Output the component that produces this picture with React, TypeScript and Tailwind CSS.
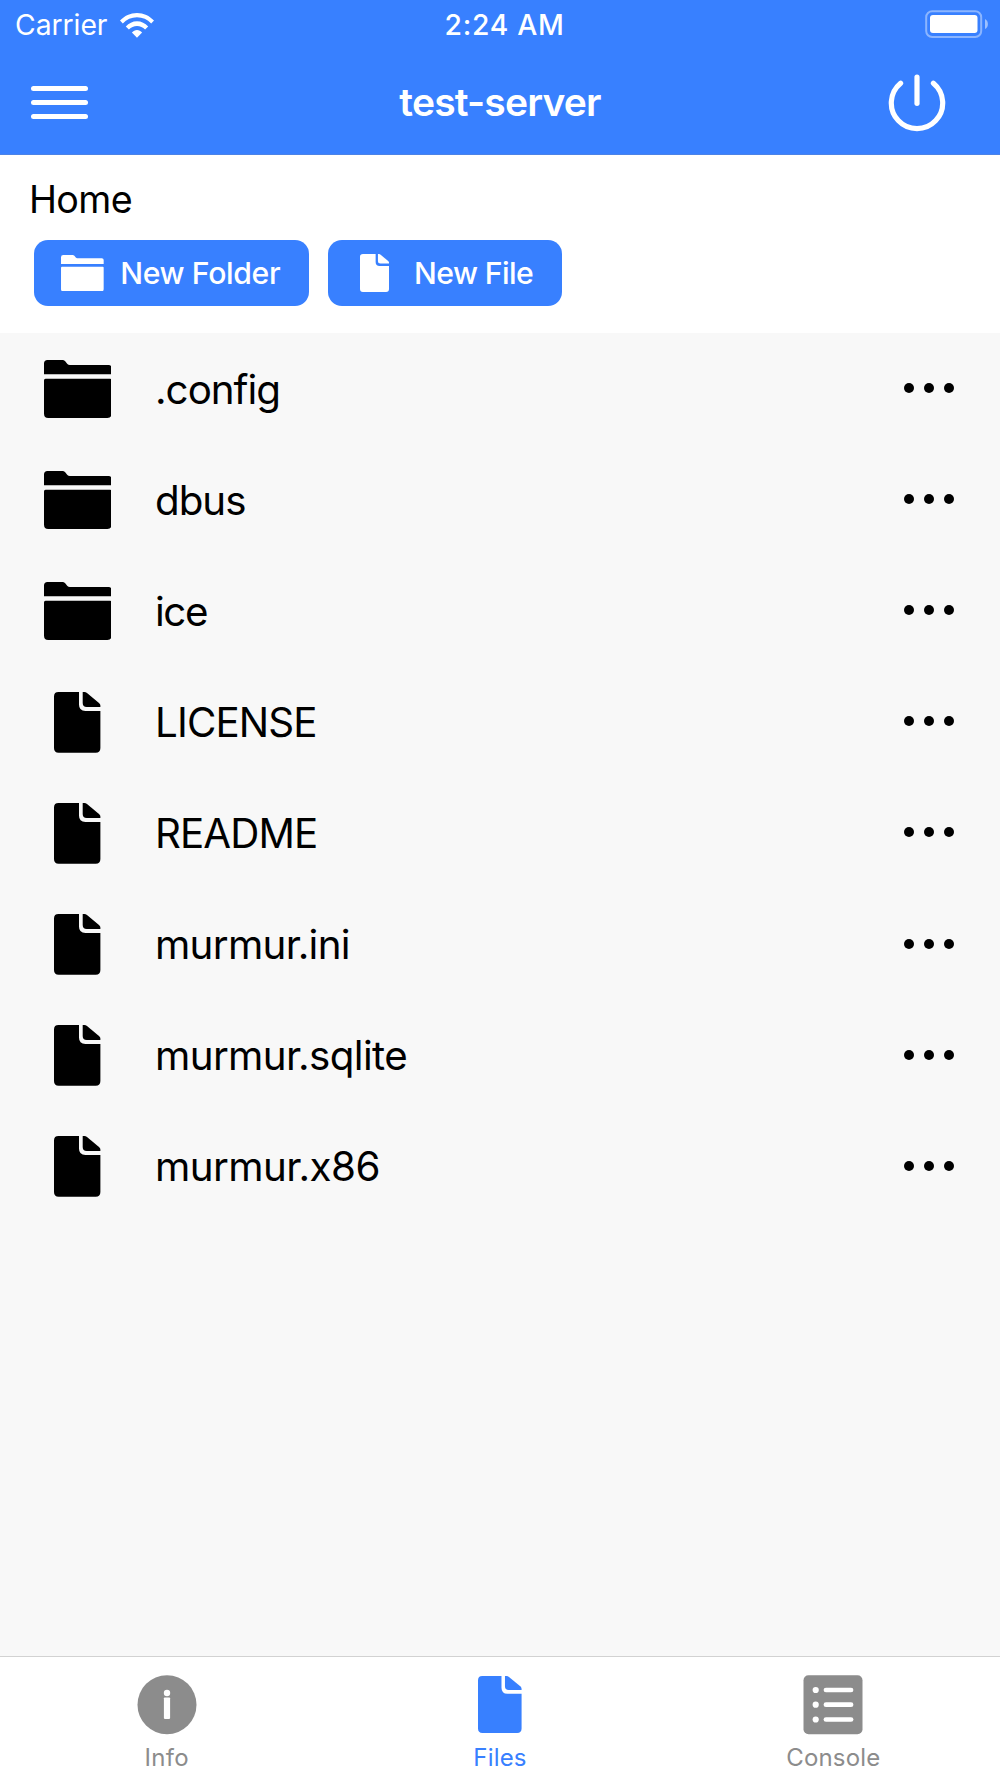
import React from "react";

type IconProps = { className?: string };

function FolderIcon({ className }: IconProps) {
  return (
    <svg viewBox="0 0 67.6 58" fill="currentColor" className={className}>
      <path d="M0 14.2V3.5Q0 0 3.5 0H18.4Q20 0 21.2 1.2L23.4 3.9Q24.4 5 25.8 5H64.6Q67.6 5 67.6 8V14.2Z" />
      <path d="M1.5 18.7H66.1Q67.6 18.7 67.6 20.2V53.8Q67.6 58 63.4 58H4.2Q0 58 0 53.8V20.2Q0 18.7 1.5 18.7Z" />
    </svg>
  );
}

function FileIcon({ className }: IconProps) {
  return (
    <svg viewBox="0 0 46.4 60.7" fill="currentColor" className={className}>
      <path d="M4.5 0H25V12.6Q25 19 31.4 19H46.4V56Q46.4 60.7 41.7 60.7H4.7Q0 60.7 0 56V4.5Q0 0 4.5 0Z" />
      <path d="M28.7 0H30.4Q31.8 0 33 1L45 11Q46.4 12.2 46.4 13.6V15H32.7Q28.7 15 28.7 11Z" />
    </svg>
  );
}

function WifiIcon() {
  return (
    <svg viewBox="0 0 34 25" fill="currentColor" className="ml-[13px] h-[25px] w-[34px] shrink-0">
      <path d="M0 7.6C4.5 2.8 10.3 0 17 0S29.5 2.8 34 7.6L31.2 10.5C27.4 6.500 22.500 4.300 17 4.300S6.600 6.500 2.800 10.500Z" />
      <path d="M5.800 13.400C8.900 10.200 12.600 8.200 17 8.200S25.100 10.200 28.200 13.400L25.100 16.600C22.800 14.200 20.200 12.900 17 12.900S11.200 14.200 8.900 16.600Z" />
      <path d="M11.900 19.600C13.400 18 15 17 17 17S20.600 18 22.100 19.600L17 24.700Z" />
    </svg>
  );
}

function BatteryIcon() {
  return (
    <svg viewBox="0 0 64 28" className="mb-[3px] h-[28px] w-[64px]">
      <rect x="1.200" y="1.200" width="55" height="25.800" rx="6" fill="none" stroke="#fff" strokeOpacity=".42" strokeWidth="2" />
      <rect x="5" y="5" width="47.500" height="18" rx="3" fill="#fff" />
      <path d="M60 9Q62.900 10.500 62.900 14T60 19Z" fill="#fff" fillOpacity=".5" />
    </svg>
  );
}

function PowerIcon() {
  return (
    <svg viewBox="0 0 58 58" fill="none" stroke="currentColor" strokeWidth="5.200" strokeLinecap="round" className="h-[58px] w-[58px]">
      <path d="M12.600 9.200A25.700 25.700 0 1 0 45.400 9.200" />
      <path d="M29 3V29.300" />
    </svg>
  );
}

function InfoIcon() {
  return (
    <svg viewBox="0 0 60 60" className="h-[60px] w-[60px]">
      <circle cx="30" cy="29.700" r="29.500" fill="currentColor" />
      <circle cx="30" cy="18" r="3.200" fill="#fff" />
      <rect x="26.900" y="22.400" width="6.200" height="21.500" rx=".8" fill="#fff" />
    </svg>
  );
}

function ListIcon() {
  return (
    <svg viewBox="0 0 60 60" className="h-[60px] w-[60px]">
      <rect x=".5" y=".2" width="59" height="59" rx="5" fill="currentColor" />
      {[15, 29.7, 44.5].map((y) => (
        <g key={y} fill="#fff">
          <circle cx="12.700" cy={y} r="3.100" />
          <rect x="20.600" y={y - 2.35} width="29.800" height="4.700" rx="2.350" />
        </g>
      ))}
    </svg>
  );
}

const entries = [
  { name: ".config", folder: true, tracking: "tracking-[-1px]" },
  { name: "dbus", folder: true, tracking: "tracking-[-1px]" },
  { name: "ice", folder: true, tracking: "tracking-[-1.4px]" },
  { name: "LICENSE", folder: false, tracking: "tracking-[-0.86px]" },
  { name: "README", folder: false, tracking: "tracking-[-0.89px]" },
  { name: "murmur.ini", folder: false, tracking: "tracking-[-0.68px]" },
  { name: "murmur.sqlite", folder: false, tracking: "tracking-[-0.61px]" },
  { name: "murmur.x86", folder: false, tracking: "tracking-[-0.54px]" },
];

export default function App() {
  return (
    <div className="flex h-[1778px] w-[1000px] flex-col overflow-hidden bg-[#f8f8f8] font-['Inter',sans-serif] whitespace-nowrap text-black">
      <header className="h-[155px] shrink-0 border-b border-[#4c83e6] bg-[#3880ff] text-white">
        <div className="grid h-[51px] grid-cols-3 items-center text-[28.3px]">
          <div className="flex items-center pl-[15px]">
            <span className="tracking-[-0.04px]">Carrier</span>
            <WifiIcon />
          </div>
          <span className="pl-[9px] text-center font-medium tracking-[0.69px]">2:24 AM</span>
          <div className="flex justify-end pr-[11px]">
            <BatteryIcon />
          </div>
        </div>
        <div className="grid h-[103px] grid-cols-3 items-center">
          <button className="ml-[31px] flex w-[56.5px] flex-col gap-[9px]" aria-label="Menu">
            <span className="h-[5px] w-full rounded-full bg-white" />
            <span className="h-[5px] w-full rounded-full bg-white" />
            <span className="h-[5px] w-full rounded-full bg-white" />
          </button>
          <h1 className="pb-px text-center text-[39px] font-semibold tracking-[-0.83px]">test-server</h1>
          <button className="mr-[54.500px] justify-self-end" aria-label="Power">
            <PowerIcon />
          </button>
        </div>
      </header>

      <section className="h-[178px] shrink-0 bg-white pt-[21px]">
        <div className="pl-[29px] text-[37.7px] leading-[46px] tracking-[-0.64px]">Home</div>
        <div className="mt-[18px] flex gap-[19.5px] pl-[34px] text-[30.2px] font-medium text-white">
          <button className="flex h-[66px] w-[274.5px] items-center rounded-[14px] bg-[#3880ff] pl-[27px]">
            <FolderIcon className="h-[36.6px] w-[42.7px] shrink-0" />
            <span className="ml-[16.5px] pt-[2px] tracking-[-0.37px]">New Folder</span>
          </button>
          <button className="flex h-[66px] w-[234px] items-center rounded-[14px] bg-[#3880ff] pl-[32px]">
            <FileIcon className="h-[38px] w-[29px] shrink-0" />
            <span className="ml-[25px] pt-[2px] tracking-[-0.59px]">New File</span>
          </button>
        </div>
      </section>

      <main className="flex-1">
        {entries.map(({ name, folder, tracking }) => (
          <div key={name} className="flex h-[111.1px] items-center text-[40.3px]">
            <div className="ml-[43px] flex w-[69px] shrink-0 justify-center">
              {folder ? <FolderIcon className="h-[58px] w-[67.6px]" /> : <FileIcon className="mt-px h-[60.7px] w-[46.4px]" />}
            </div>
            <span className={`ml-[43px] flex-1 pt-[3px] ${tracking}`}>{name}</span>
            <button className="mr-[46.5px] mb-px flex gap-[9.8px]" aria-label={`${name} options`}>
              <span className="size-[10px] rounded-full bg-black" />
              <span className="size-[10px] rounded-full bg-black" />
              <span className="size-[10px] rounded-full bg-black" />
            </button>
          </div>
        ))}
      </main>

      <nav className="grid h-[122px] shrink-0 grid-cols-3 border-t border-[#d2d2d2] bg-white text-[24px] leading-[29px] text-[#8c8c8c]">
        <div className="flex flex-col items-center pt-[17.5px]">
          <InfoIcon />
          <span className="mt-[8.5px] tracking-[0.3px]">Info</span>
        </div>
        <div className="flex flex-col items-center pt-[17.5px] text-[#3880ff]">
          <div className="flex h-[60px] items-center">
            <FileIcon className="h-[57px] w-[43.6px]" />
          </div>
          <span className="mt-[8.5px] tracking-[0.2px]">Files</span>
        </div>
        <div className="flex flex-col items-center pt-[17.5px]">
          <ListIcon />
          <span className="mt-[8.5px] tracking-[0.17px]">Console</span>
        </div>
      </nav>
    </div>
  );
}
